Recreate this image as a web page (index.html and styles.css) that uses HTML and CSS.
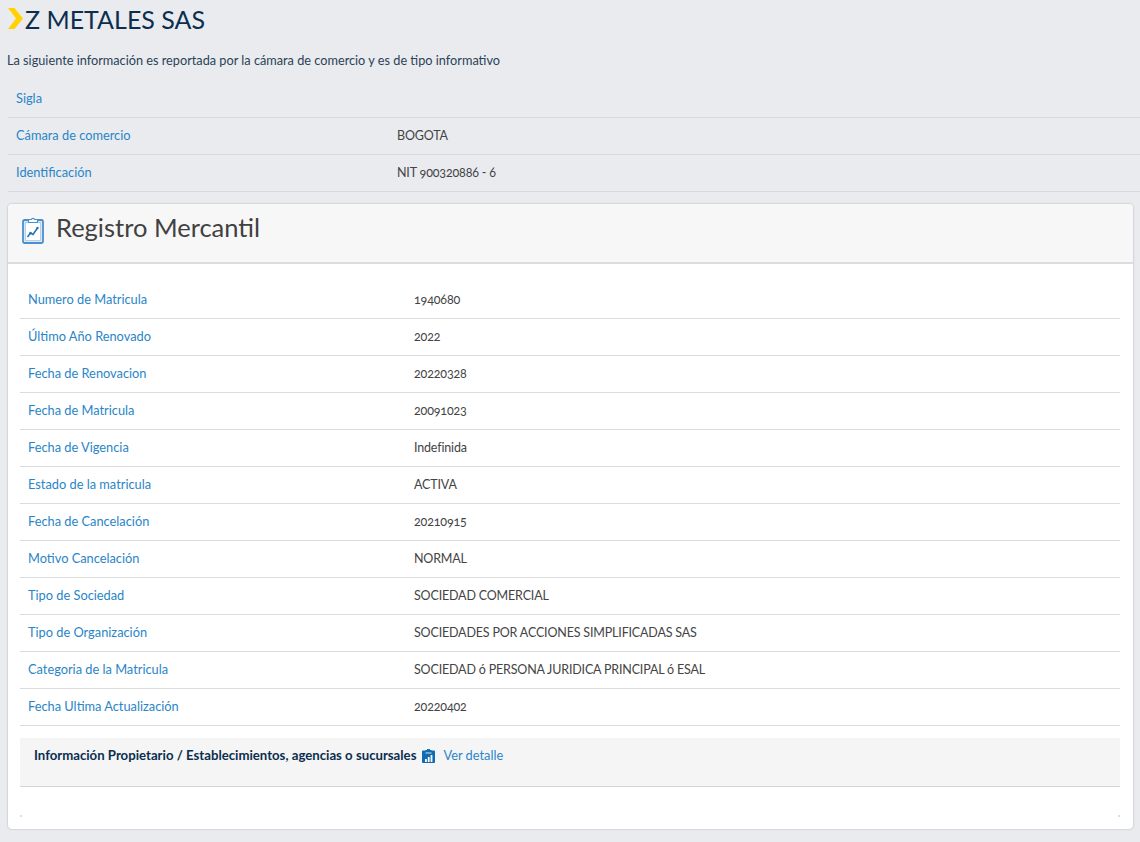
FILE: index.html
```html
<!DOCTYPE html>
<html lang="es">
<head>
    <meta charset="UTF-8">
    <meta name="viewport" content="width=device-width, initial-scale=1.0">
    <title>Z METALES SAS</title>
    <link rel="stylesheet" href="styles.css">
</head>
<body>

    <!-- Title -->
    <div class="title-row">
        <svg class="chevron" width="16" height="21" viewBox="0 0 16 21">
            <path d="M0 0h6.500l8.500 10.500L6.500 21H0l8-10.500z" fill="#ffd200"/>
        </svg>
        <h1>Z METALES SAS</h1>
    </div>
    <p class="intro">La siguiente información es reportada por la cámara de comercio y es de tipo informativo</p>

    <!-- Summary rows -->
    <div class="info-list summary">
        <div class="info-row"><span class="label">Sigla</span><span class="value"></span></div>
        <div class="info-row"><span class="label">Cámara de comercio</span><span class="value">BOGOTA</span></div>
        <div class="info-row"><span class="label">Identificación</span><span class="value">NIT 900320886 - 6</span></div>
    </div>

    <!-- Registro Mercantil -->
    <div class="card">
        <div class="card-header">
            <svg class="header-icon" width="22" height="27" viewBox="0 0 22 27" fill="none">
                <rect x="1" y="3" width="20" height="23" rx="1.500" fill="#dbe9f6" stroke="#4a90cf" stroke-width="1.800"/>
                <rect x="3.500" y="5.500" width="15" height="18" fill="#fff" stroke="#a5c9e8" stroke-width="0.800"/>
                <path d="M6.500 5.500V2.500h2.800a1.800 1.800 0 0 1 3.400 0h2.800v3h-9z" fill="#fff" stroke="#4a90cf" stroke-width="1.200"/>
                <path d="M5.500 20l3-4 2.500 1.500 4.500-6.500" stroke="#1f6fb5" stroke-width="1.500"/>
                <circle cx="8.500" cy="16" r="1.200" fill="#1f6fb5"/>
                <circle cx="15.500" cy="11" r="1.200" fill="#1f6fb5"/>
            </svg>
            <h2>Registro Mercantil</h2>
        </div>
        <div class="card-body">
            <div class="info-list detail">
                <div class="info-row"><span class="label">Numero de Matricula</span><span class="value">1940680</span></div>
                <div class="info-row"><span class="label">Último Año Renovado</span><span class="value">2022</span></div>
                <div class="info-row"><span class="label">Fecha de Renovacion</span><span class="value">20220328</span></div>
                <div class="info-row"><span class="label">Fecha de Matricula</span><span class="value">20091023</span></div>
                <div class="info-row"><span class="label">Fecha de Vigencia</span><span class="value">Indefinida</span></div>
                <div class="info-row"><span class="label">Estado de la matricula</span><span class="value">ACTIVA</span></div>
                <div class="info-row"><span class="label">Fecha de Cancelación</span><span class="value">20210915</span></div>
                <div class="info-row"><span class="label">Motivo Cancelación</span><span class="value">NORMAL</span></div>
                <div class="info-row"><span class="label">Tipo de Sociedad</span><span class="value">SOCIEDAD COMERCIAL</span></div>
                <div class="info-row"><span class="label">Tipo de Organización</span><span class="value">SOCIEDADES POR ACCIONES SIMPLIFICADAS SAS</span></div>
                <div class="info-row"><span class="label">Categoria de la Matricula</span><span class="value">SOCIEDAD ó PERSONA JURIDICA PRINCIPAL ó ESAL</span></div>
                <div class="info-row"><span class="label">Fecha Ultima Actualización</span><span class="value">20220402</span></div>
            </div>

            <div class="owner-box">
                <strong>Información Propietario / Establecimientos, agencias o sucursales</strong>
                <svg class="owner-icon" width="13" height="14" viewBox="0 0 13 14">
                    <path d="M1 1.500h2.500V1H5a1.500 1.500 0 0 1 3 0h1.500v.5H12a1 1 0 0 1 1 1V13a1 1 0 0 1-1 1H1a1 1 0 0 1-1-1V2.500a1 1 0 0 1 1-1z" fill="#0f6cb3"/>
                    <rect x="3.500" y="3.500" width="6" height="1" fill="#cfe3f3"/>
                    <rect x="3" y="10" width="1.800" height="3" fill="#fff"/>
                    <rect x="5.800" y="8" width="1.800" height="5" fill="#fff"/>
                    <rect x="8.600" y="6" width="1.800" height="7" fill="#fff"/>
                </svg>
                <a class="detail-link" href="#">Ver detalle</a>
            </div>
            <div class="owner-foot"></div>
        </div>
    </div>

</body>
</html>
```

FILE: styles.css
```css
/* Page */
body {
    margin: 0;
    padding: 0 0 12px 8px;
    background-color: #e9ebef;
    font-family: Lato, "Open Sans", sans-serif;
    font-size: 12.8px;
    color: #444;
}

/* Title */
.title-row {
    display: flex;
    align-items: center;
    height: 37px;
}

.chevron {
    margin-right: 1px;
}

.title-row h1 {
    margin: 0;
    font-size: 25px;
    font-weight: 400;
    color: #0b2e4f;
}

.intro {
    margin: 0 0 0 -1px;
    padding-top: 15px;
    height: 27px;
    line-height: 16px;
    font-size: 12.72px;
    color: #2b4257;
}

/* Label / value rows */
.info-row {
    display: grid;
    box-sizing: border-box;
    height: 37px;
    padding-bottom: 2px;
    align-items: center;
    border-bottom: 1px solid #dcdcdc;
}

.summary {
    padding-top: 2px;
}

.summary .info-row {
    grid-template-columns: 381px 1fr;
    padding-left: 8px;
    border-color: #d6d8dc;
}

.detail .info-row {
    grid-template-columns: 386px 1fr;
    padding-left: 8px;
}

.label {
    color: #2a85c7;
}

.value {
    font-size: 12.5px;
    letter-spacing: -0.17px;
    font-variant-numeric: oldstyle-nums;
}

/* Card */
.card {
    width: 1125px;
    height: 625px;
    box-sizing: border-box;
    margin-top: 12px;
    background: #fff;
    border-radius: 4px;
    box-shadow: 0 0 2px rgba(0, 0, 0, 0.3);
}

.card-header {
    display: flex;
    align-items: flex-start;
    height: 45px;
    padding: 13px 0 0 14px;
    background: #f7f7f7;
    border-bottom: 2px solid #dddddd;
    border-radius: 4px 4px 0 0;
}

.card-header h2 {
    margin: -5px 0 0 12px;
    font-size: 25.5px;
    font-weight: 400;
    color: #414141;
}

.card-body {
    padding: 18px 13px 0 12px;
}

/* Owner box */
.owner-box {
    display: flex;
    align-items: flex-start;
    height: 49px;
    margin-top: 12px;
    padding: 9px 14px 0;
    box-sizing: border-box;
    background: #f5f5f5;
    border-bottom: 1px solid #d4d4d4;
}

.owner-box strong {
    font-size: 13.2px;
    color: #0b2e4f;
}

.owner-icon {
    margin: 2px 8px 0 6px;
}

.detail-link {
    color: #2a85c7;
    text-decoration: none;
}

/* tiny corner marks under the owner box */
.owner-foot {
    display: flex;
    justify-content: space-between;
    align-items: flex-end;
    height: 30px;
}

.owner-foot::before,
.owner-foot::after {
    content: "";
    width: 2px;
    height: 2px;
    background: #dddddd;
}
```
